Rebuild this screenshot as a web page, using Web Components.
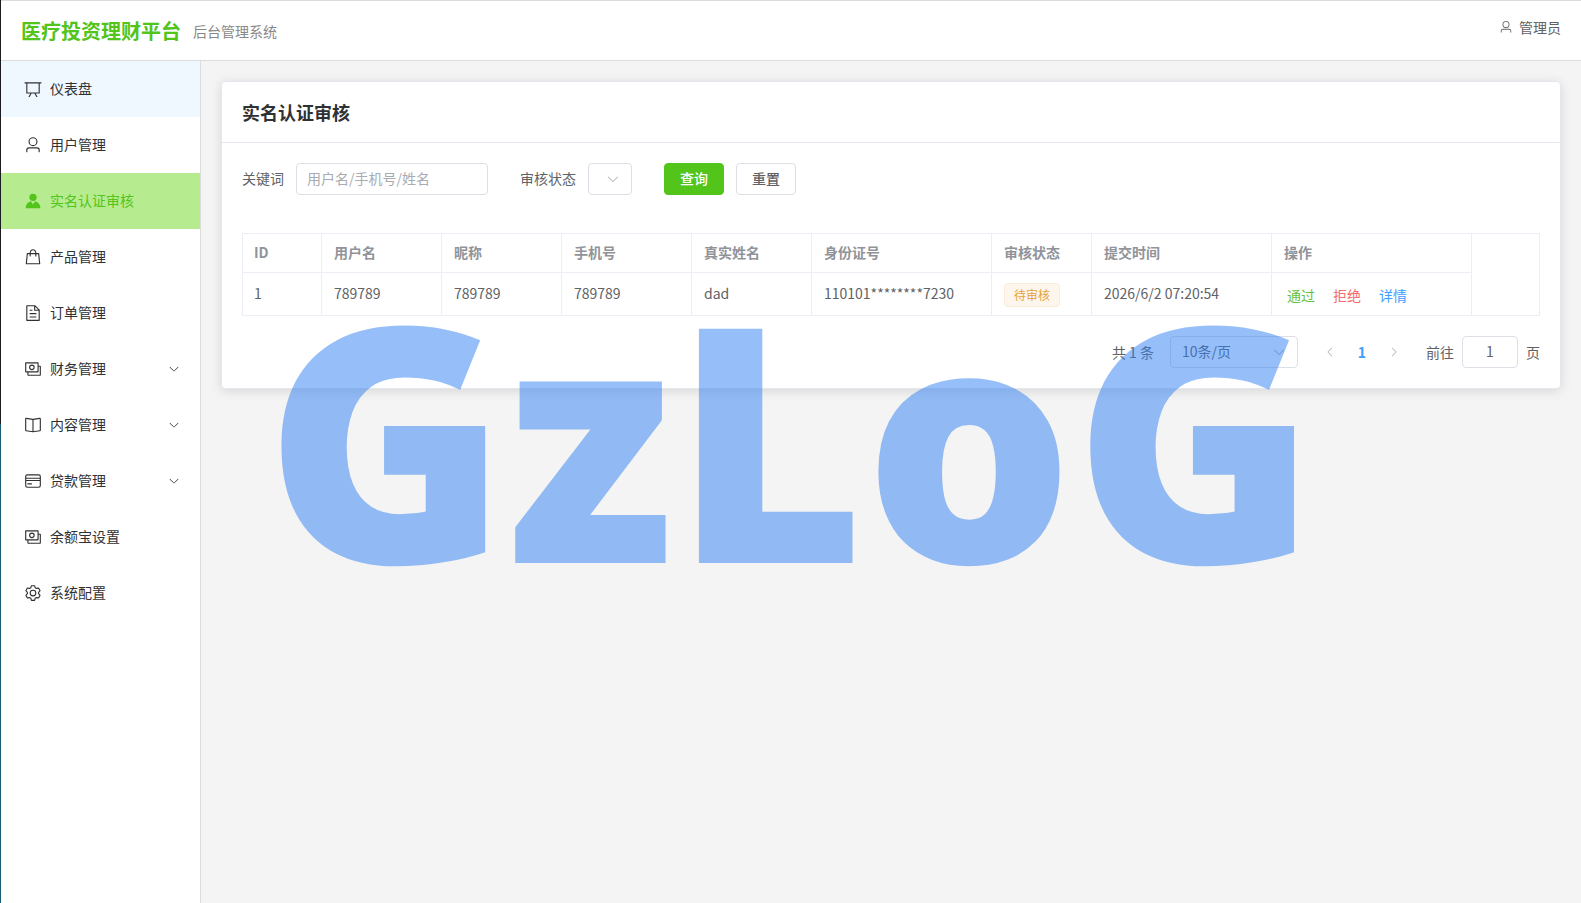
<!DOCTYPE html>
<html lang="zh-CN">
<head>
<meta charset="utf-8">
<meta name="viewport" content="width=device-width, initial-scale=1">
<title>实名认证审核 - 医疗投资理财平台</title>
<style>
  :root {
    --brand: #52c41a;
    --text: #303133;
    --text-regular: #606266;
    --text-soft: #909399;
    --line: #ebeef5;
    --control-line: #dcdfe6;
    --blue: #409eff;
  }
  html, body { margin: 0; min-height: 100vh; }
  body {
    font: 14px/20px "Noto Sans CJK SC", "Noto Sans", sans-serif;
    color: var(--text);
    background: #f4f4f4;
  }
</style>
</head>
<body>
<app-shell>
  <app-header slot="header" subtitle="后台管理系统" user="管理员">医疗投资理财平台</app-header>
  <side-menu slot="aside">
    <menu-item icon="board" hovered>仪表盘</menu-item>
    <menu-item icon="user">用户管理</menu-item>
    <menu-item icon="avatar" active>实名认证审核</menu-item>
    <menu-item icon="goods">产品管理</menu-item>
    <menu-item icon="document">订单管理</menu-item>
    <menu-item icon="money" expandable>财务管理</menu-item>
    <menu-item icon="reading" expandable>内容管理</menu-item>
    <menu-item icon="card" expandable>贷款管理</menu-item>
    <menu-item icon="money">余额宝设置</menu-item>
    <menu-item icon="setting">系统配置</menu-item>
  </side-menu>
  <panel-card>
    <span slot="title">实名认证审核</span>
    <search-form></search-form>
    <audit-table></audit-table>
    <page-nav></page-nav>
  </panel-card>
</app-shell>
<text-watermark>GzLoG</text-watermark>

<script>
const ICONS = {
  board: 'M32 128h960v64H32z M192 192v512h640V192zm-64-64h768v608a32 32 0 0 1-32 32H160a32 32 0 0 1-32-32z M322.176 960H248.32l144.64-250.56 55.424 32zm453.888 0h-73.856L576 741.44l55.424-32z',
  user: 'M512 512a192 192 0 1 0 0-384 192 192 0 0 0 0 384m0 64a256 256 0 1 1 0-512 256 256 0 0 1 0 512m320 320v-96a96 96 0 0 0-96-96H288a96 96 0 0 0-96 96v96a32 32 0 1 1-64 0v-96a160 160 0 0 1 160-160h448a160 160 0 0 1 160 160v96a32 32 0 1 1-64 0',
  avatar: 'M628.736 528.896A416 416 0 0 1 928 928H96a415.87 415.87 0 0 1 299.264-399.104L512 704zM720 304a208 208 0 1 1-416 0 208 208 0 0 1 416 0',
  goods: 'M320 288v-22.336C320 154.688 405.504 64 512 64s192 90.688 192 201.664v22.4h131.072a32 32 0 0 1 31.808 28.8l57.6 576a32 32 0 0 1-31.808 35.2H131.328a32 32 0 0 1-31.808-35.2l57.6-576a32 32 0 0 1 31.808-28.8H320zm64 0h256v-22.336C640 189.248 582.272 128 512 128s-128 61.248-128 137.664v22.4zm-64 64H217.92l-51.2 512h690.56l-51.264-512H704v96a32 32 0 1 1-64 0v-96H384v96a32 32 0 0 1-64 0z',
  document: 'M832 384H576V128H192v768h640zm-26.496-64L640 154.496V320zM160 64h480l256 256v608a32 32 0 0 1-32 32H160a32 32 0 0 1-32-32V96a32 32 0 0 1 32-32m160 448h384v64H320zm0-192h160v64H320zm0 384h384v64H320z',
  money: 'M256 640v192h640V384H768v-64h151a41 41 0 0 1 41 41v494a41 41 0 0 1-41 41H233a41 41 0 0 1-41-41V640z M768 192H128v448h640zm64-23v494a41 41 0 0 1-41 41H105a41 41 0 0 1-41-41V169a41 41 0 0 1 41-41h686a41 41 0 0 1 41 41z M448 576a160 160 0 1 1 0-320 160 160 0 0 1 0 320m0-64a96 96 0 1 0 0-192 96 96 0 0 0 0 192',
  reading: 'm512 863.36 384-54.848v-638.72L525.568 222.72a96 96 0 0 1-27.136 0L128 169.792v638.72zM137.024 106.432l370.432 52.928a32 32 0 0 0 9.088 0l370.432-52.928A64 64 0 0 1 960 169.792v638.72a64 64 0 0 1-54.976 63.36l-388.48 55.488a32 32 0 0 1-9.088 0l-388.48-55.488A64 64 0 0 1 64 808.512v-638.72a64 64 0 0 1 73.024-63.36 M480 192h64v704h-64z',
  card: 'M896 256a64 64 0 0 0-64-64H192a64 64 0 0 0-64 64v512a64 64 0 0 0 64 64h640a64 64 0 0 0 64-64zM192 128h640a128 128 0 0 1 128 128v512a128 128 0 0 1-128 128H192A128 128 0 0 1 64 768V256a128 128 0 0 1 128-128 M64 320h896v64H64zm0 128h896v64H64zm128 192h256v64H192z',
  setting: 'M600.704 64a32 32 0 0 1 30.464 22.208l35.2 109.376c14.784 7.232 28.928 15.36 42.432 24.512l112.384-24.192a32 32 0 0 1 34.432 15.36L944.32 364.8a32 32 0 0 1-4.032 37.504l-77.12 85.12a357 357 0 0 1 0 49.024l77.12 85.248a32 32 0 0 1 4.032 37.504l-88.704 153.6a32 32 0 0 1-34.432 15.296L708.8 803.904c-13.44 9.088-27.648 17.28-42.368 24.512l-35.264 109.376A32 32 0 0 1 600.704 960H423.296a32 32 0 0 1-30.464-22.208L357.696 828.48a352 352 0 0 1-42.56-24.64l-112.32 24.256a32 32 0 0 1-34.432-15.36L79.68 659.2a32 32 0 0 1 4.032-37.504l77.12-85.248a357 357 0 0 1 0-48.896l-77.12-85.248A32 32 0 0 1 79.68 364.8l88.704-153.6a32 32 0 0 1 34.432-15.296l112.32 24.256c13.568-9.152 27.776-17.408 42.56-24.64l35.2-109.312A32 32 0 0 1 423.232 64H600.64zm-23.424 64H446.72l-36.352 113.088-24.512 11.968a294 294 0 0 0-34.816 20.096l-22.656 15.36-116.224-25.088-65.28 113.152 79.68 88.192-1.92 27.136a293 293 0 0 0 0 40.192l1.92 27.136-79.808 88.192 65.344 113.152 116.224-25.024 22.656 15.296a294 294 0 0 0 34.816 20.096l24.512 11.968L446.72 896h130.688l36.48-113.152 24.448-11.904a288 288 0 0 0 34.752-20.096l22.592-15.296 116.288 25.024 65.28-113.152-79.744-88.192 1.92-27.136a293 293 0 0 0 0-40.256l-1.92-27.136 79.808-88.128-65.344-113.152-116.288 24.96-22.592-15.232a288 288 0 0 0-34.752-20.096l-24.448-11.904L577.344 128zM512 320a192 192 0 1 1 0 384 192 192 0 0 1 0-384m0 64a128 128 0 1 0 0 256 128 128 0 0 0 0-256',
  down: 'M831.872 340.864 512 652.672 192.128 340.864a30.59 30.59 0 0 0-42.752 0 29.12 29.12 0 0 0 0 41.6L489.664 714.24a32 32 0 0 0 44.672 0l340.288-331.712a29.12 29.12 0 0 0 0-41.728 30.59 30.59 0 0 0-42.752 0z',
  left: 'M683.136 831.872 371.328 512 683.136 192.128a30.59 30.59 0 0 0 0-42.752 29.12 29.12 0 0 0-41.6 0L309.76 489.664a32 32 0 0 0 0 44.672l331.712 340.288a29.12 29.12 0 0 0 41.728 0 30.59 30.59 0 0 0 0-42.752z',
  right: 'M340.864 831.872 652.672 512 340.864 192.128a30.59 30.59 0 0 1 0-42.752 29.12 29.12 0 0 1 41.6 0L714.24 489.664a32 32 0 0 1 0 44.672L382.528 874.624a29.12 29.12 0 0 1-41.728 0 30.59 30.59 0 0 1 0-42.752z'
};

/* Base class: renders the subclass's markup into an open shadow root. */
class Base extends HTMLElement {
  connectedCallback() {
    if (!this.shadowRoot) this.attachShadow({ mode: 'open' }).innerHTML = this.render();
  }
}
const define = (name, render) =>
  customElements.define(name, class extends Base { render() { return render(this); } });

const CONTROL = `
  *, *::before, *::after { box-sizing: border-box; }
  input, select, button { font: inherit; color: inherit; margin: 0; }
  input, select {
    appearance: none; width: 100%; height: 32px; padding: 0 11px 2px;
    border: 1px solid var(--control-line); border-radius: 4px; background: #fff;
    color: var(--text-regular); outline: none;
  }
  input::placeholder { color: #a8abb2; opacity: 1; }
  .select { position: relative; display: block; }
  .select app-icon {
    position: absolute; top: 9px; right: 12px; color: #a8abb2; pointer-events: none;
  }
`;

define('app-icon', el => `
  <style>
    :host { display: inline-block; flex: none; width: 14px; height: 14px; }
    svg { display: block; width: 100%; height: 100%; fill: currentColor; }
  </style>
  <svg viewBox="0 0 1024 1024" aria-hidden="true"><path d="${ICONS[el.getAttribute('name')]}"/></svg>`);

define('app-shell', () => `
  <style>
    :host {
      display: grid; box-sizing: border-box; min-height: 100vh; padding-left: 1px;
      grid-template: auto 1fr / 200px 1fr;
      background: linear-gradient(#1b1b20 47%, #185d78 47%);
    }
    .top { grid-column: 1 / -1; }
    .side { background: #fff; border-right: 1px solid #dcdcdc; }
    main { min-width: 0; padding: 20px; background: #f4f4f4; }
  </style>
  <div class="top"><slot name="header"></slot></div>
  <aside class="side"><slot name="aside"></slot></aside>
  <main><slot></slot></main>`);

define('app-header', el => `
  <style>
    :host {
      display: flex; align-items: center; justify-content: space-between;
      box-sizing: border-box; height: 61px; padding: 0 20px; background: #fff;
      border: solid #dcdcdc; border-width: 1px 0;
    }
    .brand { display: flex; align-items: center; gap: 12px; }
    h1 { margin: 0; font-size: 20px; line-height: 28px; font-weight: 700; color: var(--brand); }
    .sub { color: #888; }
    button {
      display: flex; align-items: center; gap: 6px; padding: 0; margin-bottom: 8px;
      border: 0; background: none; font: inherit; color: var(--text-regular);
    }
  </style>
  <div class="brand"><h1><slot></slot></h1><span class="sub">${el.getAttribute('subtitle')}</span></div>
  <button type="button"><app-icon name="user"></app-icon>${el.getAttribute('user')}</button>`);

define('side-menu', () => `
  <style>:host, nav { display: block; }</style>
  <nav aria-label="主菜单"><slot></slot></nav>`);

define('menu-item', el => `
  <style>
    :host { display: block; color: var(--text); }
    :host([hovered]) { background: #f0f8ff; }
    :host([active]) { background: #b7eb8f; color: var(--brand); }
    a {
      display: flex; align-items: center; gap: 8px; height: 56px; padding: 0 20px 0 23px;
      color: inherit; text-decoration: none;
    }
    .lead { width: 18px; height: 18px; }
    .label { flex: 1; padding-bottom: 2px; }
    .arrow { width: 12px; height: 12px; }
  </style>
  <a href="#"${el.hasAttribute('active') ? ' aria-current="page"' : ''}>
    <app-icon class="lead" name="${el.getAttribute('icon')}"></app-icon>
    <span class="label"><slot></slot></span>
    ${el.hasAttribute('expandable') ? '<app-icon class="arrow" name="down"></app-icon>' : ''}
  </a>`);

define('panel-card', () => `
  <style>
    :host {
      display: block; background: #fff; border: 1px solid #e4e7ed; border-radius: 4px;
      box-shadow: 0 2px 12px rgba(0, 0, 0, .12);
    }
    header { padding: 18px 20px; border-bottom: 1px solid #e4e7ed; }
    h2 { margin: 0; font-size: 18px; line-height: 24px; font-weight: 700; }
    .body { padding: 20px; }
  </style>
  <header><h2><slot name="title"></slot></h2></header>
  <div class="body"><slot></slot></div>`);

define('search-form', () => `
  <style>
    ${CONTROL}
    :host { display: block; margin-bottom: 38px; color: var(--text-regular); }
    form { display: flex; flex-wrap: wrap; gap: 32px; }
    .item { display: flex; align-items: center; gap: 12px; }
    label { padding-bottom: 2px; }
    .keyword { width: 192px; padding: 0 10px 2px; }
    .status { width: 44px; }
    button {
      width: 60px; height: 32px; padding: 0 0 2px; border: 1px solid var(--control-line);
      border-radius: 4px; background: #fff; font-weight: 500;
    }
    .primary { background: var(--brand); border-color: var(--brand); color: #fff; }
  </style>
  <form>
    <div class="item">
      <label for="keyword">关键词</label>
      <input class="keyword" id="keyword" type="text" placeholder="用户名/手机号/姓名">
    </div>
    <div class="item">
      <label for="status">审核状态</label>
      <span class="select status"><select id="status"><option value=""></option></select><app-icon name="down"></app-icon></span>
    </div>
    <div class="item">
      <button class="primary" type="button">查询</button>
      <button type="button">重置</button>
    </div>
  </form>`);

const COLUMNS = [['ID', 80], ['用户名', 120], ['昵称', 120], ['手机号', 130], ['真实姓名', 120],
  ['身份证号', 180], ['审核状态', 100], ['提交时间', 180], ['操作', 200]];

define('audit-table', () => `
  <style>
    :host { display: block; margin-bottom: 20px; color: var(--text-regular); }
    table {
      width: 100%; table-layout: fixed; border-collapse: separate; border-spacing: 0;
      box-shadow: inset 1px 1px var(--line);
    }
    th, td {
      box-sizing: border-box; padding: 0 12px 2px; text-align: left;
      border: solid var(--line); border-width: 0 1px 1px 0;
    }
    th { height: 40px; color: var(--text-soft); font-weight: 700; }
    td { height: 43px; }
    .tag {
      display: block; box-sizing: border-box; width: 56px; height: 24px; margin-top: 4px;
      border: 1px solid #faecd8; border-radius: 4px; background: #fdf6ec; color: #e6a23c;
      font-size: 12px; line-height: 22px; text-align: center;
    }
    .ops { display: flex; gap: 12px; padding-top: 4px; }
    button { padding: 0 3px; border: 0; background: none; font: inherit; }
    .pass { color: #67c23a; } .deny { color: #f56c6c; } .more { color: var(--blue); }
  </style>
  <table>
    <colgroup>${COLUMNS.map(c => `<col style="width:${c[1]}px">`).join('')}<col></colgroup>
    <tr>${COLUMNS.map(c => `<th scope="col">${c[0]}</th>`).join('')}<td rowspan="2"></td></tr>
    <tr>
      <td>1</td><td>789789</td><td>789789</td><td>789789</td><td>dad</td>
      <td>110101********7230</td>
      <td><span class="tag">待审核</span></td>
      <td>2026/6/2 07:20:54</td>
      <td><div class="ops">
        <button class="pass" type="button">通过</button>
        <button class="deny" type="button">拒绝</button>
        <button class="more" type="button">详情</button>
      </div></td>
    </tr>
  </table>`);

define('page-nav', () => `
  <style>
    ${CONTROL}
    :host { display: block; color: var(--text-regular); }
    nav { display: flex; justify-content: flex-end; align-items: center; gap: 16px; }
    .size { width: 128px; }
    .pager { display: flex; }
    .pager button {
      display: grid; place-items: center; width: 32px; height: 32px; padding: 0;
      border: 0; background: none;
    }
    .pager button:disabled { color: #a8abb2; }
    .pager app-icon { width: 12px; height: 12px; }
    .pager .current { color: var(--blue); font-weight: 700; }
    .jump { display: flex; align-items: center; gap: 8px; }
    .jump input { width: 56px; text-align: center; }
  </style>
  <nav aria-label="分页">
    <span>共 1 条</span>
    <span class="select size"><select aria-label="每页条数"><option>10条/页</option></select><app-icon name="down"></app-icon></span>
    <div class="pager">
      <button type="button" disabled aria-label="上一页"><app-icon name="left"></app-icon></button>
      <button class="current" type="button" aria-current="page">1</button>
      <button type="button" disabled aria-label="下一页"><app-icon name="right"></app-icon></button>
    </div>
    <div class="jump"><label for="page">前往</label><input id="page" type="text" value="1"><span>页</span></div>
  </nav>`);

define('text-watermark', () => `
  <style>
    :host {
      position: fixed; inset: 0; z-index: 10; display: flex; align-items: center;
      justify-content: center; padding-bottom: 32px; pointer-events: none;
      font: 900 328px/1 "Noto Sans", "Open Sans", sans-serif; color: rgba(45, 125, 241, .5);
    }
  </style>
  <slot></slot>`);
</script>
</body>
</html>
